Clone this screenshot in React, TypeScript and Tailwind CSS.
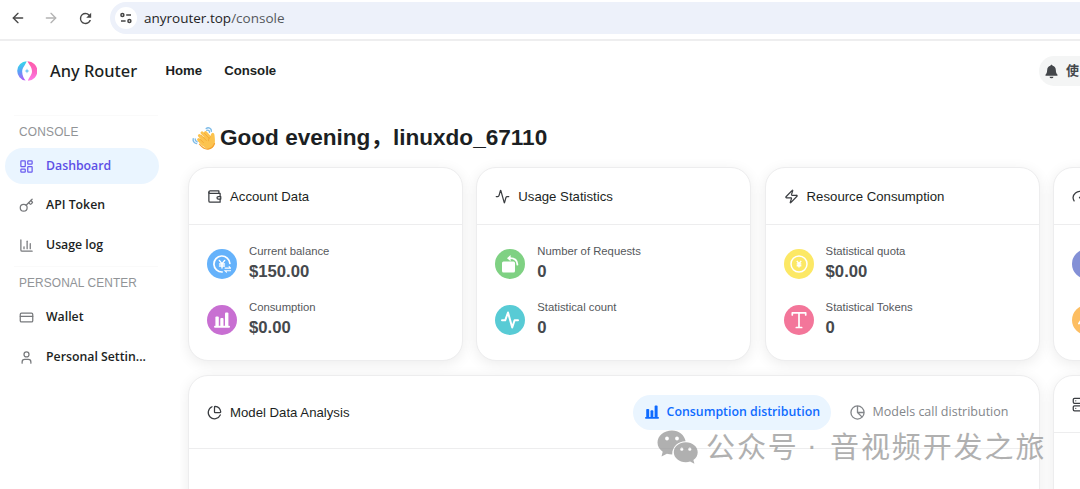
import React from 'react';
import {
  Activity,
  ArrowLeft,
  ArrowRight,
  ChartColumn,
  ChartPie,
  CreditCard,
  Gauge,
  Key,
  LayoutDashboard,
  Server,
  User,
  Zap,
} from 'lucide-react';

interface Stat {
  label?: string;
  value?: string;
  color: string;
  icon?: React.ReactNode;
}

interface StatCardProps {
  title?: string;
  icon: React.ReactNode;
  stats: Stat[];
}

const cardClass =
  'rounded-[20px] border border-[#ededee] bg-white shadow-[0_3px_14px_rgba(0,0,0,0.08)]';

const WalletIcon = () => (
  <svg viewBox="0 0 24 24" className="size-[15px]" fill="none" stroke="currentColor" strokeWidth="2" strokeLinecap="round" strokeLinejoin="round">
    <path d="M21 12V7H5a2 2 0 0 1 0-4h14v4" />
    <path d="M3 5v14a2 2 0 0 0 2 2h16v-5" />
    <path d="M18 12a2 2 0 0 0 0 4h4v-4Z" />
  </svg>
);

const ReloadIcon = () => (
  <svg viewBox="0 0 24 24" className="size-[17px]" fill="#474747">
    <path d="M17.65 6.35A7.96 7.96 0 0 0 12 4a8 8 0 1 0 7.73 10h-2.08A6 6 0 1 1 12 6c1.66 0 3.14.69 4.22 1.78L13 11h7V4z" />
  </svg>
);

const SiteInfoIcon = () => (
  <svg viewBox="0 0 14 12" className="h-[12px] w-[14px]" fill="none" stroke="#454545" strokeWidth="1.5">
    <circle cx="3.4" cy="3" r="1.5" />
    <path d="M7.2 3h4.8M2 9h4.600" />
    <circle cx="10.400" cy="9" r="1.5" />
  </svg>
);

const Logo = () => (
  <svg viewBox="0 0 20 20" className="size-[20px]">
    <defs>
      <linearGradient id="logoLeft" x1="0.3" y1="0" x2="0.5" y2="1">
        <stop offset="0" stopColor="#2ee6e6" />
        <stop offset="0.5" stopColor="#5aa0f8" />
        <stop offset="1" stopColor="#b65cf5" />
      </linearGradient>
      <linearGradient id="logoRight" x1="0" y1="0" x2="0" y2="1">
        <stop offset="0" stopColor="#ff5ba8" />
        <stop offset="0.55" stopColor="#fb66c4" />
        <stop offset="1" stopColor="#ff7be8" />
      </linearGradient>
    </defs>
    <path d="M9.600.3A9.700 9.700 0 0 0 8.600 19.600C7 17.600 5 14.400 5.200 10.200 5.400 6.400 8.600 4 9.600.3z" fill="url(#logoLeft)" />
    <path d="M10.400.3a9.700 9.700 0 0 1 .6 19.400c.6-2.900 4-5.500 4-9.400C15 6.400 12.200 3.800 10.400.3z" fill="url(#logoRight)" />
    <path d="M10 7.600l.7 1.700 1.700.7-1.700.7-.7 1.700-.7-1.700-1.700-.7 1.700-.7z" fill="#6cc3f5" />
  </svg>
);

const BellIcon = () => (
  <svg viewBox="0 0 14 16" className="h-[15px] w-[13px]" fill="#44474b">
    <path d="M7 .7c.8 0 1.100.6 1.100 1.200C10.400 2.500 11.600 4.300 11.700 6.600c.1 2.500.5 3.400 1.600 4.500.5.6.2 1.600-.6 1.600H1.300c-.8 0-1.100-1-.6-1.600 1.100-1.100 1.500-2 1.600-4.500C2.400 4.300 3.600 2.500 5.900 1.900 5.900 1.300 6.200.7 7 .7z" />
    <path d="M4.900 13.600h4.200a2.100 1.700 0 0 1-4.200 0z" />
  </svg>
);

const WaveIcon = () => (
  <svg viewBox="0 0 24 24" className="size-[24px]" fill="none">
    <path d="M14.200 2.600c2-1.800 5.500-.4 5.200 2.700M14.800 4.400c1.400-.7 2.900.2 2.700 2M1.200 12.800c-.5 2.300.9 4.400 3.400 4.800M3.200 13c-.1 1.400.6 2.400 2 2.900" stroke="#7dbbe8" strokeWidth="1.400" strokeLinecap="round" />
    <path d="M6.600 13.600l4.400 4.600M7.400 9.600l6 6M10 6.800l6 6.500M13.500 6.500l4.500 5" stroke="#fcc34f" strokeWidth="3" strokeLinecap="round" />
    <path d="M10 11l8.300.2c.3-2 .8-4.500 2.500-4.500 1.600 0 1.700 2.200 1.900 4.300.2 2.300.4 4.700 0 6.800-.7 3.200-3 5.400-6 5.200-2.500-.1-4.200-1.500-6-3.300L6.500 15.500z" fill="#fcc34f" />
    <path d="M7.500 18.200c3 3.700 5.700 5.400 8.700 4.900 3.100-.6 5.300-2.600 6.300-5.600" stroke="#f5a12f" strokeWidth="1.200" strokeLinecap="round" />
    <path d="M9.300 9.300l5 5.200M12.400 7.200l4.600 5M18.300 11c-1.400 1-2 2.200-1.700 3.800M8 13.200l3.500 3.500" stroke="#f0a02e" strokeWidth=".7" strokeLinecap="round" />
  </svg>
);

// Filled bars standing on a base line
const BarsIcon = ({ className }: { className: string }) => (
  <svg viewBox="0 0 16 16" className={className} fill="currentColor">
    <rect x="0" y="13.700" width="16" height="2" rx="1" />
    <rect x="1.400" y="4.500" width="3.400" height="10" rx="1" />
    <rect x="6.300" y="6" width="3.200" height="8.500" rx="1" />
    <rect x="11" y=".6" width="3.400" height="14" rx="1" />
  </svg>
);

const yenPath = 'M6.300 5.400L9 8.600l2.700-3.200M9 8.500v4.500M6.500 9h5M6.500 11h5';

const BalanceIcon = () => (
  <svg viewBox="0 0 18 18" className="size-[18px]" fill="none" stroke="white" strokeLinecap="round">
    <path d="M9.200 17A8 8 0 1 1 16.900 8.500" strokeWidth="1.700" />
    <path d={yenPath} strokeWidth="1.400" />
    <path d="M12 13.100h5.600l-1.500-1.500M17.600 15.700H12l1.500 1.500" strokeWidth="1.100" />
  </svg>
);

const CoinIcon = () => (
  <svg viewBox="0 0 18 18" className="size-[18px]" fill="none" stroke="white">
    <circle cx="9" cy="9" r="8" strokeWidth="1.500" />
    <path d="M6.800 5.900L9 8.600l2.200-2.700M9 8.500v4M6.700 9h4.600M6.700 10.800h4.600" strokeWidth="1.400" />
  </svg>
);

const RequestsIcon = () => (
  <svg viewBox="0 0 18 18" className="size-[18px]" fill="white">
    <rect x="1" y="6.500" width="13" height="11" rx="1.500" />
    <path d="M6 3.200L9.600 0v6.200z" />
    <path d="M9 3.200c4.500 0 7.200 2 7.400 6.400" fill="none" stroke="white" strokeWidth="1.800" strokeLinecap="round" />
  </svg>
);

const PulseIcon = () => (
  <svg viewBox="0 0 18 18" className="size-[18px]" fill="none" stroke="white" strokeWidth="2" strokeLinecap="round" strokeLinejoin="round">
    <path d="M1 9.300h3.200L7 1.500l4.200 15L13.600 9.300H17" />
  </svg>
);

// Slab shaped mark used for token counts
const TokensIcon = () => (
  <svg viewBox="0 0 18 18" className="size-[18px]" fill="none" stroke="white" strokeWidth="1.700" strokeLinecap="round" strokeLinejoin="round">
    <path d="M2.300 3.900V1.800h13.400v2.100M9 1.800v14.700M6.300 16.500h5.400" />
  </svg>
);

const TrendIcon = () => (
  <svg viewBox="0 0 18 18" className="size-[18px]" fill="none" stroke="white" strokeWidth="2" strokeLinecap="round" strokeLinejoin="round">
    <path d="M1 12.500L5.500 6l4 6L17 3" />
  </svg>
);

const PieIcon = () => (
  <svg viewBox="0 0 16 16" className="size-[15px]" fill="none" stroke="#83868a" strokeWidth="1.400" strokeLinejoin="round">
    <circle cx="8" cy="8" r="7" />
    <path d="M8 1v7h7M8 8l5 4.900" />
  </svg>
);

const WeChatIcon = () => (
  <svg viewBox="0 0 42 34" className="h-[34px] w-[42px]">
    <path
      fillRule="evenodd"
      d="M15 .5C7 .5.500 5.800.500 12.600c0 3.800 2 7 5.200 9.200L4.500 26.500l5.400-2.800c1.700.5 3.500.8 5.300.8C15 16 22 11 28.600 11.200 27.500 5 21.800.5 15 .5zM10 6.600a1.900 1.900 0 1 0 0 3.800 1.900 1.900 0 0 0 0-3.800zm10 0a1.900 1.900 0 1 0 0 3.800 1.900 1.900 0 0 0 0-3.800z"
    />
    <path
      fillRule="evenodd"
      d="M28.800 12.200c-6.700 0-12 4.400-12 10s5.300 10 12 10c1.500 0 3-.2 4.300-.6l4.300 2.200-1-3.700c2.700-1.800 4.300-4.600 4.300-7.900 0-5.600-5.300-10-11.900-10zm-4 5.400a1.600 1.600 0 1 0 0 3.200 1.600 1.600 0 0 0 0-3.200zm8 0a1.600 1.600 0 1 0 0 3.200 1.600 1.600 0 0 0 0-3.200z"
    />
  </svg>
);

const StatCard: React.FC<StatCardProps> = ({ title, icon, stats }) => (
  <section className={`${cardClass} h-[194px] w-[275px] shrink-0`}>
    <h2 className="flex h-[57px] items-center gap-[8px] border-b border-[#ededee] pl-[18px] text-[13.2px] text-[#1c1f23]">
      <span className="text-[#3a3d41]">{icon}</span>
      {title && <span className="pt-px">{title}</span>}
    </h2>
    <div className="flex flex-col gap-[17px] pt-[18px] pl-[18px]">
      {stats.map((stat, i) => (
        <div key={i} className="flex h-[39px] items-center gap-3">
          <div className={`mt-[3px] flex size-[30px] items-center justify-center rounded-full text-white ${stat.color}`}>
            {stat.icon}
          </div>
          {stat.label && (
            <div className="pt-px">
              <div className="text-[11.3px] leading-[17px] text-[#55585c]">{stat.label}</div>
              <div className="text-[16.7px] leading-[24px] font-bold text-[#46494d]">{stat.value}</div>
            </div>
          )}
        </div>
      ))}
    </div>
  </section>
);

const cards: StatCardProps[] = [
  {
    title: 'Account Data',
    icon: <WalletIcon />,
    stats: [
      { label: 'Current balance', value: '$150.00', color: 'bg-[#65b2fb]', icon: <BalanceIcon /> },
      { label: 'Consumption', value: '$0.00', color: 'bg-[#c86fd2]', icon: <BarsIcon className="size-[16px]" /> },
    ],
  },
  {
    title: 'Usage Statistics',
    icon: <Activity size={15} />,
    stats: [
      { label: 'Number of Requests', value: '0', color: 'bg-[#7fd183]', icon: <RequestsIcon /> },
      { label: 'Statistical count', value: '0', color: 'bg-[#58cbd5]', icon: <PulseIcon /> },
    ],
  },
  {
    title: 'Resource Consumption',
    icon: <Zap size={15} />,
    stats: [
      { label: 'Statistical quota', value: '$0.00', color: 'bg-[#fce865]', icon: <CoinIcon /> },
      { label: 'Statistical Tokens', value: '0', color: 'bg-[#f3769a]', icon: <TokensIcon /> },
    ],
  },
  {
    icon: <Gauge size={15} />,
    stats: [{ color: 'bg-[#8390d6]' }, { color: 'bg-[#fdbe62]', icon: <TrendIcon /> }],
  },
];

const NavItem = ({ icon, label, active = false }: { icon: React.ReactNode; label: string; active?: boolean }) => (
  <a
    className={`flex h-[36px] w-[154px] items-center gap-[12px] rounded-full pl-[14px] font-['Open_Sans',sans-serif] text-[12.3px] font-semibold ${
      active ? 'bg-[#eaf5ff] text-[#5d4fe6]' : 'text-[#1c1f23]'
    }`}
  >
    <span className={active ? 'text-[#6a5cf0]' : 'text-[#77797c]'}>{icon}</span>
    {label}
  </a>
);

const App: React.FC = () => {
  return (
    <div className="relative flex h-[489px] w-[1080px] flex-col overflow-hidden bg-white font-['Liberation_Sans','Noto_Sans_CJK_SC',sans-serif] text-[#1c1f23]">
      {/* Browser toolbar */}
      <div className="flex h-[41px] shrink-0 border-b-2 border-[#eeeeef] pt-[2px] pl-[10px]">
        <div className="flex h-[32px] w-[100px] items-center">
          <ArrowLeft size={16} strokeWidth={2} className="text-[#474747]" />
          <ArrowRight size={16} strokeWidth={2} className="ml-[17px] text-[#b3b3b3]" />
          <span className="ml-[18px]"><ReloadIcon /></span>
        </div>
        <div className="flex h-[32px] flex-1 items-center rounded-l-full bg-[#edf1fa] pl-[5px]">
          <span className="flex size-[22px] items-center justify-center rounded-full bg-white">
            <SiteInfoIcon />
          </span>
          <span className="ml-[7px] font-['Open_Sans',sans-serif] text-[13.5px] text-[#1f1f1f]">
            anyrouter.top<span className="text-[#55585c]">/console</span>
          </span>
        </div>
      </div>

      {/* Site header */}
      <header className="flex h-[60px] shrink-0 items-center pl-[17px]">
        <Logo />
        <span className="ml-[13px] w-[115.500px] font-['Noto_Sans',sans-serif] text-[16.4px] font-medium">Any Router</span>
        <nav className="flex gap-[22px] text-[13.2px] font-bold">
          <a>Home</a>
          <a>Console</a>
        </nav>
        <div className="ml-auto flex h-[30px] w-[41px] items-center gap-[8px] overflow-hidden rounded-l-full bg-[#f4f5f5] pl-[6px] text-[13px] font-bold text-[#44474b]">
          <span className="shrink-0"><BellIcon /></span>
          <span className="shrink-0">使</span>
        </div>
      </header>

      <div className="flex min-h-0 flex-1">
        {/* Sidebar */}
        <aside className="w-[180px] shrink-0 pt-[14px] pl-[5px]">
          <div className="ml-[9px] w-[144px] border-t border-[#fafafa]" />
          <div className="mt-[8px] h-[16px] pl-[14px] text-[11.9px] leading-[16px] tracking-[0.2px] text-[#919497]">CONSOLE</div>
          <div className="mt-[8px] flex flex-col gap-[3.700px]">
            <NavItem icon={<LayoutDashboard size={15} />} label="Dashboard" active />
            <NavItem icon={<Key size={15} />} label="API Token" />
            <NavItem icon={<ChartColumn size={15} />} label="Usage log" />
          </div>
          <div className="mt-[3px] ml-[9px] w-[144px] border-t border-[#fafafa]" />
          <div className="mt-[8px] h-[16px] pl-[14px] text-[11.9px] leading-[16px] tracking-[0.1px] text-[#919497]">PERSONAL CENTER</div>
          <div className="mt-[8px] flex flex-col gap-[3.700px]">
            <NavItem icon={<CreditCard size={15} />} label="Wallet" />
            <NavItem icon={<User size={15} />} label="Personal Settin..." />
          </div>
        </aside>

        {/* Dashboard */}
        <main className="min-w-0 flex-1 overflow-hidden pl-[8px]">
          <h1 className="flex h-[66px] items-center gap-[4px] pt-[7px] pl-[4px] text-[22.6px] font-bold tracking-[-0.02px]">
            <WaveIcon />
            <span>Good evening，linuxdo_67110</span>
          </h1>
          <div className="flex gap-[13.300px]">
            {cards.map((card, i) => (
              <StatCard key={i} {...card} />
            ))}
          </div>
          <div className="mt-[14px] flex gap-[13.300px]">
            <section className={`${cardClass} h-[200px] w-[851.600px] shrink-0`}>
              <div className="flex h-[73px] items-center border-b border-[#ededee] pl-[18px] text-[13.2px]">
                <ChartPie size={15} className="text-[#3a3d41]" />
                <h2 className="ml-[8px] pt-px">Model Data Analysis</h2>
                <div className="mr-[13px] ml-auto flex font-['Open_Sans',sans-serif]">
                  <button className="flex h-[35px] w-[198px] items-center gap-[8px] rounded-full bg-[#eaf5ff] pl-[12px] text-[12.35px] font-semibold whitespace-nowrap text-[#0f6bff]">
                    <BarsIcon className="size-[14px] shrink-0" />
                    Consumption distribution
                  </button>
                  <button className="flex h-[35px] w-[195px] items-center gap-[8px] pl-[19px] text-[12.5px] whitespace-nowrap text-[#83868a]">
                    <PieIcon />
                    Models call distribution
                  </button>
                </div>
              </div>
            </section>
            <section className={`${cardClass} h-[200px] w-[275px] shrink-0`}>
              <div className="flex h-[57px] items-center border-b border-[#ededee] pl-[18px]">
                <Server size={15} className="text-[#3a3d41]" />
              </div>
            </section>
          </div>
        </main>
      </div>

      {/* Watermark */}
      <div className="absolute top-[427px] left-[657px] flex items-center whitespace-nowrap text-[#969696] opacity-75">
        <span className="mt-px fill-[#969696]"><WeChatIcon /></span>
        <div className="mb-[3px] ml-[7px] flex font-['Noto_Sans_CJK_SC',sans-serif] text-[29px] leading-[36px] tracking-[1.900px]">
          <span className="w-[101px]">公众号</span>
          <span className="w-[23px] font-['Liberation_Sans',sans-serif]">·</span>
          <span>音视频开发之旅</span>
        </div>
      </div>
    </div>
  );
};

export default App;
